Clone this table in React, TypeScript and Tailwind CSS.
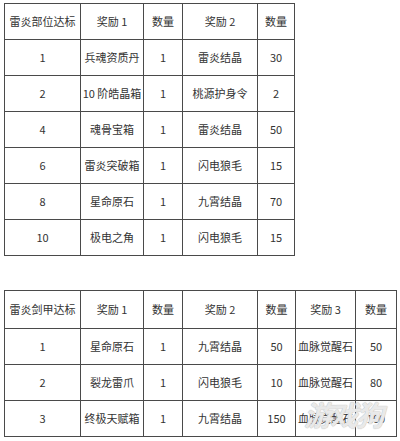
const partRows = [
  ['1', '兵魂资质丹', '1', '雷炎结晶', '30'],
  ['2', '10 阶皓晶箱', '1', '桃源护身令', '2'],
  ['4', '魂骨宝箱', '1', '雷炎结晶', '50'],
  ['6', '雷炎突破箱', '1', '闪电狼毛', '15'],
  ['8', '星命原石', '1', '九霄结晶', '70'],
  ['10', '极电之角', '1', '闪电狼毛', '15'],
];

const armorRows = [
  ['1', '星命原石', '1', '九霄结晶', '50', '血脉觉醒石', '50'],
  ['2', '裂龙雷爪', '1', '闪电狼毛', '10', '血脉觉醒石', '80'],
  ['3', '终极天赋箱', '1', '九霄结晶', '150', '血脉觉醒石', '100'],
];

const cell = 'border border-[#4a4a4a] text-center align-middle p-0 whitespace-nowrap';

function RewardTable({
  head,
  rows,
  widths,
  headHeight,
}: {
  head: string[];
  rows: string[][];
  widths: number[];
  headHeight: string;
}) {
  return (
    <table className="border-collapse table-fixed">
      <colgroup>
        {widths.map((w, i) => (
          <col key={i} style={{ width: w }} />
        ))}
      </colgroup>
      <thead>
        <tr className={headHeight}>
          {head.map((h, i) => (
            <th key={i} className={`${cell} font-normal`}>
              {h}
            </th>
          ))}
        </tr>
      </thead>
      <tbody>
        {rows.map((r, i) => (
          <tr key={i} className="h-[36px]">
            {r.map((c, j) => (
              <td key={j} className={cell}>
                {c}
              </td>
            ))}
          </tr>
        ))}
      </tbody>
    </table>
  );
}

export default function App() {
  return (
    <div
      className="relative w-[400px] h-[441px] bg-white text-[#333] text-[11px] leading-none overflow-hidden pl-[4px] pt-[3px]"
      style={{ fontFamily: '"Noto Sans CJK SC", "Noto Sans", sans-serif' }}
    >
      <RewardTable
        head={['雷炎部位达标', '奖励 1', '数量', '奖励 2', '数量']}
        rows={partRows}
        widths={[76, 63, 39, 75, 37]}
        headHeight="h-[36px]"
      />
      <div className="mt-[34px]">
        <RewardTable
          head={['雷炎剑甲达标', '奖励 1', '数量', '奖励 2', '数量', '奖励 3', '数量']}
          rows={armorRows}
          widths={[76, 63, 39, 75, 38, 60, 41]}
          headHeight="h-[38px]"
        />
      </div>
      {/* watermark */}
      <span
        className="pointer-events-none absolute left-[304px] top-[400px] text-[28px] font-bold italic text-white/70 tracking-[-2px]"
        style={{ textShadow: '0 0 1px #bbb, 0 0 1px #bbb' }}
      >
        游戏狗
      </span>
    </div>
  );
}
